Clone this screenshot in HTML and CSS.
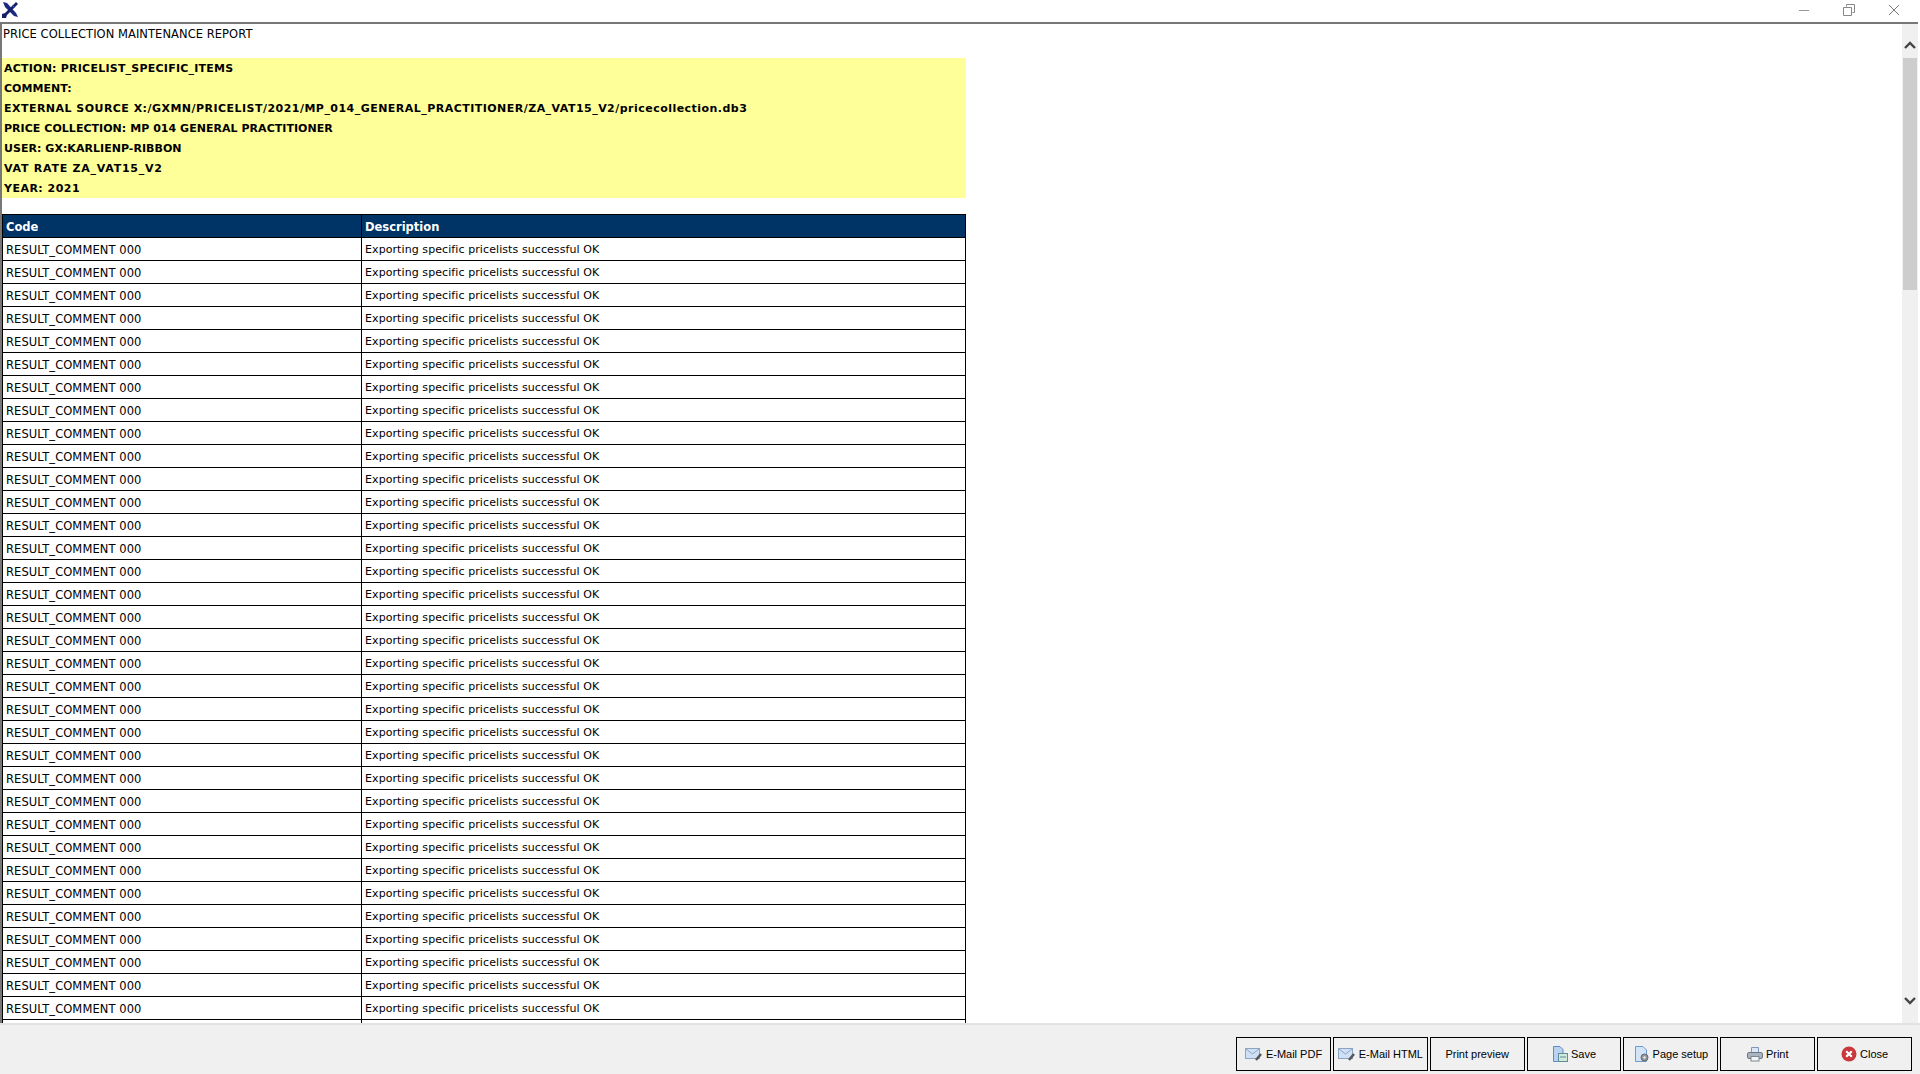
FILE: index.html
```html
<!DOCTYPE html>
<html lang="en">
<head>
    <meta charset="UTF-8">
    <title>Price Collection Maintenance Report</title>
    <link rel="stylesheet" href="styles.css">
</head>
<body>
    <div class="title-bar">
        <svg class="app-icon" width="18" height="18" viewBox="0 0 18 18">
            <path d="M2 1 L6 2 L15 12 L17 16 L13 15 L4 6 Z" fill="#1a2a80"/>
            <path d="M15 1 L17 3 L6 14 L5 17 L1 17 L1 13 L4 12 Z" fill="#14206a"/>
            <path d="M11 4 L14 7" stroke="#5a70d0" stroke-width="1"/>
        </svg>
        <div class="window-controls">
            <svg width="12" height="12" viewBox="0 0 12 12"><path d="M1 6.5 H11" stroke="#999" fill="none"/></svg>
            <svg width="12" height="12" viewBox="0 0 12 12"><path d="M3.5 2.5 V0.5 H11.5 V8.5 H9.5 M0.5 3.5 H8.5 V11.5 H0.5 Z" stroke="#888" fill="none"/></svg>
            <svg width="12" height="12" viewBox="0 0 12 12"><path d="M1 1 L11 11 M11 1 L1 11" stroke="#777" fill="none"/></svg>
        </div>
    </div>

    <div class="main">
        <div class="report">
            <div class="report-title">PRICE COLLECTION MAINTENANCE REPORT</div>
            <div class="summary">
                <div>ACTION: PRICELIST_SPECIFIC_ITEMS</div>
                <div class="tight">COMMENT:</div>
                <div class="wide">EXTERNAL SOURCE X:/GXMN/PRICELIST/2021/MP_014_GENERAL_PRACTITIONER/ZA_VAT15_V2/pricecollection.db3</div>
                <div class="tight">PRICE COLLECTION: MP 014 GENERAL PRACTITIONER</div>
                <div class="tight">USER: GX:KARLIENP-RIBBON</div>
                <div class="wider">VAT RATE ZA_VAT15_V2</div>
                <div class="wide">YEAR: 2021</div>
            </div>
            <table class="results">
                <thead>
                    <tr><th class="col-code">Code</th><th>Description</th></tr>
                </thead>
                <tbody>
                    <tr><td class="code">RESULT_COMMENT 000</td><td class="desc">Exporting specific pricelists successful OK</td></tr>
                    <tr><td class="code">RESULT_COMMENT 000</td><td class="desc">Exporting specific pricelists successful OK</td></tr>
                    <tr><td class="code">RESULT_COMMENT 000</td><td class="desc">Exporting specific pricelists successful OK</td></tr>
                    <tr><td class="code">RESULT_COMMENT 000</td><td class="desc">Exporting specific pricelists successful OK</td></tr>
                    <tr><td class="code">RESULT_COMMENT 000</td><td class="desc">Exporting specific pricelists successful OK</td></tr>
                    <tr><td class="code">RESULT_COMMENT 000</td><td class="desc">Exporting specific pricelists successful OK</td></tr>
                    <tr><td class="code">RESULT_COMMENT 000</td><td class="desc">Exporting specific pricelists successful OK</td></tr>
                    <tr><td class="code">RESULT_COMMENT 000</td><td class="desc">Exporting specific pricelists successful OK</td></tr>
                    <tr><td class="code">RESULT_COMMENT 000</td><td class="desc">Exporting specific pricelists successful OK</td></tr>
                    <tr><td class="code">RESULT_COMMENT 000</td><td class="desc">Exporting specific pricelists successful OK</td></tr>
                    <tr><td class="code">RESULT_COMMENT 000</td><td class="desc">Exporting specific pricelists successful OK</td></tr>
                    <tr><td class="code">RESULT_COMMENT 000</td><td class="desc">Exporting specific pricelists successful OK</td></tr>
                    <tr><td class="code">RESULT_COMMENT 000</td><td class="desc">Exporting specific pricelists successful OK</td></tr>
                    <tr><td class="code">RESULT_COMMENT 000</td><td class="desc">Exporting specific pricelists successful OK</td></tr>
                    <tr><td class="code">RESULT_COMMENT 000</td><td class="desc">Exporting specific pricelists successful OK</td></tr>
                    <tr><td class="code">RESULT_COMMENT 000</td><td class="desc">Exporting specific pricelists successful OK</td></tr>
                    <tr><td class="code">RESULT_COMMENT 000</td><td class="desc">Exporting specific pricelists successful OK</td></tr>
                    <tr><td class="code">RESULT_COMMENT 000</td><td class="desc">Exporting specific pricelists successful OK</td></tr>
                    <tr><td class="code">RESULT_COMMENT 000</td><td class="desc">Exporting specific pricelists successful OK</td></tr>
                    <tr><td class="code">RESULT_COMMENT 000</td><td class="desc">Exporting specific pricelists successful OK</td></tr>
                    <tr><td class="code">RESULT_COMMENT 000</td><td class="desc">Exporting specific pricelists successful OK</td></tr>
                    <tr><td class="code">RESULT_COMMENT 000</td><td class="desc">Exporting specific pricelists successful OK</td></tr>
                    <tr><td class="code">RESULT_COMMENT 000</td><td class="desc">Exporting specific pricelists successful OK</td></tr>
                    <tr><td class="code">RESULT_COMMENT 000</td><td class="desc">Exporting specific pricelists successful OK</td></tr>
                    <tr><td class="code">RESULT_COMMENT 000</td><td class="desc">Exporting specific pricelists successful OK</td></tr>
                    <tr><td class="code">RESULT_COMMENT 000</td><td class="desc">Exporting specific pricelists successful OK</td></tr>
                    <tr><td class="code">RESULT_COMMENT 000</td><td class="desc">Exporting specific pricelists successful OK</td></tr>
                    <tr><td class="code">RESULT_COMMENT 000</td><td class="desc">Exporting specific pricelists successful OK</td></tr>
                    <tr><td class="code">RESULT_COMMENT 000</td><td class="desc">Exporting specific pricelists successful OK</td></tr>
                    <tr><td class="code">RESULT_COMMENT 000</td><td class="desc">Exporting specific pricelists successful OK</td></tr>
                    <tr><td class="code">RESULT_COMMENT 000</td><td class="desc">Exporting specific pricelists successful OK</td></tr>
                    <tr><td class="code">RESULT_COMMENT 000</td><td class="desc">Exporting specific pricelists successful OK</td></tr>
                    <tr><td class="code">RESULT_COMMENT 000</td><td class="desc">Exporting specific pricelists successful OK</td></tr>
                    <tr><td class="code">RESULT_COMMENT 000</td><td class="desc">Exporting specific pricelists successful OK</td></tr>
                    <tr><td></td><td></td></tr>
                </tbody>
            </table>
        </div>
        <div class="scrollbar">
            <div class="scroll-arrow arrow-up">
                <svg width="12" height="8" viewBox="0 0 12 8"><path d="M1 7 L6 2 L11 7" stroke="#444" stroke-width="2.4" fill="none"/></svg>
            </div>
            <div class="scroll-thumb"></div>
            <div class="scroll-track"></div>
            <div class="scroll-arrow arrow-down">
                <svg width="12" height="8" viewBox="0 0 12 8"><path d="M1 1 L6 6 L11 1" stroke="#444" stroke-width="2.4" fill="none"/></svg>
            </div>
        </div>
    </div>

    <div class="button-bar">
        <button class="btn">
            <svg width="18" height="16" viewBox="0 0 18 16"><rect x="0.5" y="2.5" width="14" height="10" fill="#cfe0f4" stroke="#8aa4c4"/><path d="M1 3 L7.5 8 L14 3" stroke="#8aa4c4" fill="none"/><path d="M11 14 L16 8" stroke="#555" stroke-width="2.5"/></svg>
            E-Mail PDF
        </button>
        <button class="btn">
            <svg width="18" height="16" viewBox="0 0 18 16"><rect x="0.5" y="2.5" width="14" height="10" fill="#cfe0f4" stroke="#8aa4c4"/><path d="M1 3 L7.5 8 L14 3" stroke="#8aa4c4" fill="none"/><path d="M11 14 L16 8" stroke="#555" stroke-width="2.5"/></svg>
            E-Mail HTML
        </button>
        <button class="btn">Print preview</button>
        <button class="btn">
            <svg width="16" height="16" viewBox="0 0 16 16"><path d="M1.5 0.5 H8 L11 3.5 V15.5 H1.5 Z" fill="#b9d2f0" stroke="#5f8cc4"/><rect x="6.5" y="7.5" width="9" height="8" fill="#cfe8d8" stroke="#5f8c9c"/><path d="M8 11 H14" stroke="#5f8c9c"/></svg>
            Save
        </button>
        <button class="btn">
            <svg width="16" height="16" viewBox="0 0 16 16"><path d="M1.5 0.5 H9 L12.5 4 V15.5 H1.5 Z" fill="#d4e4f8" stroke="#6f9ad0"/><circle cx="10.5" cy="11.5" r="3.5" fill="#8e959c" stroke="#666"/><circle cx="10.5" cy="11.5" r="1.2" fill="#e8e8e8"/></svg>
            Page setup
        </button>
        <button class="btn">
            <svg width="16" height="16" viewBox="0 0 16 16"><path d="M4.5 6 V1.5 H11.5 V6" fill="#dbe8f6" stroke="#7d97b8"/><rect x="0.5" y="6.5" width="15" height="6" rx="1.5" fill="#aab4c0" stroke="#6d7884"/><rect x="4" y="10.5" width="8" height="4.5" fill="#f4f4f4" stroke="#7d8894"/></svg>
            Print
        </button>
        <button class="btn">
            <svg width="16" height="16" viewBox="0 0 16 16"><circle cx="8" cy="8" r="7.5" fill="#c8383c"/><path d="M5.2 5.2 L10.8 10.8 M10.8 5.2 L5.2 10.8" stroke="#fff" stroke-width="2.2"/></svg>
            Close
        </button>
    </div>
</body>
</html>
```

FILE: styles.css
```css
* {
    margin: 0;
    padding: 0;
    box-sizing: border-box;
}

body {
    height: 100vh;
    overflow: hidden;
    display: flex;
    flex-direction: column;
    background: #fff;
    color: #000;
    font-family: "DejaVu Sans", sans-serif;
    font-size: 11px;
}

.title-bar {
    height: 24px;
    display: flex;
    align-items: flex-start;
    justify-content: space-between;
    padding: 1px 2px 0 1px;
    border-bottom: 2px solid #777;
    margin-right: 2px;
}

.app-icon {
    display: block;
}

.window-controls {
    display: flex;
    gap: 33px;
    padding: 3px 16px 0 0;
}

.main {
    flex: 1;
    min-height: 0;
    display: flex;
    padding-right: 2px;
}

.report {
    flex: 1;
    min-width: 0;
    overflow: hidden;
    border-left: 2px solid #777;
}

.report-title {
    height: 34px;
    padding: 2px 0 0 1px;
    font-size: 11.5px;
    letter-spacing: 0.05px;
    line-height: 16px;
}

.summary {
    width: 964px;
    height: 140px;
    background: #ffff99;
    padding: 1px 0 0 2px;
    font-weight: bold;
    letter-spacing: 0.23px;
    line-height: 20px;
    margin-bottom: 16px;
}

.summary .tight {
    letter-spacing: 0.04px;
}

.summary .wide {
    letter-spacing: 0.47px;
}

.summary .wider {
    letter-spacing: 0.75px;
}

.results {
    width: 964px;
    table-layout: fixed;
    border-collapse: collapse;
}

.results th,
.results td {
    height: 23px;
    padding: 1px 3px 0;
    border: 1px solid #000;
    text-align: left;
    white-space: nowrap;
    overflow: hidden;
}

.results th {
    background: #003366;
    color: #fff;
    font-size: 11.5px;
}

.results .code {
    font-size: 11.5px;
    letter-spacing: 0.08px;
}

.results .desc {
    letter-spacing: 0.085px;
}

.col-code {
    width: 359px;
}

.scrollbar {
    width: 16px;
    display: flex;
    flex-direction: column;
    background: #f0f0f0;
}

.scroll-arrow {
    height: 34px;
    display: flex;
    justify-content: center;
}

.arrow-up {
    align-items: flex-end;
    padding-bottom: 9px;
}

.arrow-down {
    align-items: flex-start;
    padding-top: 8px;
}

.scroll-thumb {
    height: 232px;
    margin: 0 1px;
    background: #cdcdcd;
}

.scroll-track {
    flex: 1;
}

.button-bar {
    height: 51px;
    display: flex;
    justify-content: flex-end;
    gap: 2px;
    padding: 12px 8px 0 0;
    background: #f0f0f0;
    border-top: 2px solid #e3e3e3;
}

.btn {
    width: 94.85px;
    height: 34px;
    display: flex;
    align-items: center;
    justify-content: center;
    gap: 3px;
    background: #f0f0f0;
    border: 1px solid #000;
    font-family: "Liberation Sans", sans-serif;
    font-size: 11px;
}
```
